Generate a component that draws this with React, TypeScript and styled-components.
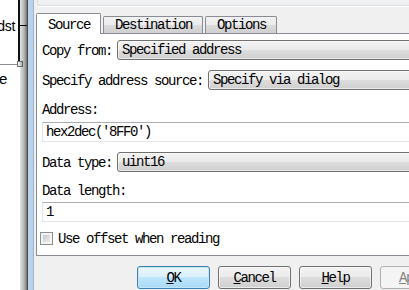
import React from "react";
import styled, { createGlobalStyle, css } from "styled-components";

const Global = createGlobalStyle`
  html, body { margin: 0; padding: 0; background: #fff; overflow: hidden; }
  body { font-family: "Liberation Mono", "Courier New", monospace; }
`;

const Screen = styled.div`
  display: flex;
  width: 409px;
  height: 290px;
  overflow: hidden;
  background: #fff;
`;

/* --- model canvas behind the dialog --- */
const Canvas = styled.div`
  position: relative;
  flex: 0 0 27px;
  height: 100%;
  background: #fff;
  font-family: "Liberation Sans", Arial, sans-serif;
  color: #000;
`;

const Block = styled.div`
  position: absolute;
  left: -10px;
  top: -10px;
  width: 28px;
  height: 74px;
  border-right: 2px solid #111;
  border-bottom: 1px solid #8a8f96;
`;

const PortLabel = styled.span`
  position: absolute;
  right: 3px;
  top: 28px;
  font-size: 14px;
  line-height: 16px;
  letter-spacing: -0.3px;
`;

const PortLine = styled.div`
  position: absolute;
  left: 20px;
  top: 25px;
  width: 7px;
  height: 1px;
  background: #000;
`;

const Handle = styled.div`
  position: absolute;
  left: 17px;
  top: 61px;
  width: 4px;
  height: 4px;
  border: 1px solid #777;
  background: #e6e6e6;
`;

const StrayText = styled.span`
  position: absolute;
  left: -1px;
  top: 71px;
  font-size: 15px;
  line-height: 16px;
`;

const Shadow = styled.div`
  position: absolute;
  right: 0;
  top: 0;
  bottom: 0;
  width: 7px;
  background: linear-gradient(to right, rgba(0,0,0,0.1), rgba(0,0,0,0.3) 60%, rgba(0,0,0,0.55));
`;

/* --- dialog window --- */
const Window = styled.div`
  flex: none;
  display: flex;
  height: 100%;
  border-left: 1px solid #4a4a4a;
  background: #b9d1ea;
  padding-left: 5px;
`;

const Client = styled.div`
  box-sizing: border-box;
  width: 428px;
  height: 100%;
  border-left: 1px solid #9fb3cc;
  background: #f0f0f0;
  padding-left: 2px;
  display: flex;
  flex-direction: column;
  font-size: 14px;
  letter-spacing: -1.4px;
  color: #000;
`;

const TopStrip = styled.div`
  height: 5px;
  margin-left: 1px;
  border-left: 1px solid #d5dfe5;
  border-bottom: 1px solid #d5dfe5;
  border-bottom-left-radius: 3px;
  box-shadow: 0 1px 0 #fff;
`;

const TabBar = styled.div`
  display: flex;
  align-items: flex-end;
  height: 20px;
  margin-top: 7px;
`;

const Tab = styled.div<{ $active?: boolean }>`
  box-sizing: border-box;
  padding: 0 10px 0 11px;
  line-height: 17px;
  white-space: nowrap;
  border: 1px solid #898c95;
  border-bottom: none;
  border-radius: 2px 2px 0 0;
  ${(p) =>
    p.$active
      ? css`
          position: relative;
          z-index: 1;
          height: 21px;
          margin-bottom: -1px;
          padding-top: 3px;
          background: #fff;
        `
      : css`
          height: 17px;
          margin-left: 2px;
          background: linear-gradient(#f2f2f2, #ebebeb 50%, #dddddd 50%, #cfcfcf);
        `}
`;

const Panel = styled.div`
  box-sizing: border-box;
  width: 400px;
  border: 1px solid #898c95;
  background: #fff;
  padding: 6px 0 10px 5px;
  display: flex;
  flex-direction: column;
`;

const Row = styled.div<{ $mt?: number }>`
  display: flex;
  align-items: center;
  gap: 5px;
  margin-top: ${(p) => p.$mt ?? 0}px;
`;

const Label = styled.div<{ $mt?: number }>`
  height: 16px;
  line-height: 18px;
  white-space: nowrap;
  margin-top: ${(p) => p.$mt ?? 0}px;
`;

const Combo = styled.div`
  flex: 1;
  box-sizing: border-box;
  height: 20px;
  line-height: 19px;
  padding-left: 4px;
  white-space: nowrap;
  border: 1px solid #707070;
  border-radius: 3px;
  background: linear-gradient(#f2f2f2, #ebebeb 50%, #dddddd 50%, #cfcfcf);
  box-shadow: inset 0 0 0 1px rgba(255,255,255,0.55);
`;

const TextBox = styled.div<{ $mt?: number }>`
  box-sizing: border-box;
  height: 20px;
  line-height: 19px;
  padding-left: 3px;
  margin-top: ${(p) => p.$mt ?? 0}px;
  border: 1px solid #e2e3ea;
  border-top-color: #abadb3;
  border-bottom-color: #e3e9ef;
  background: #fff;
  white-space: nowrap;
`;

const CheckRow = styled.label`
  display: flex;
  align-items: center;
  gap: 5px;
  margin-top: 10px;
  margin-left: -2px;
  height: 13px;
  line-height: 16px;
`;

const CheckBox = styled.span`
  box-sizing: border-box;
  width: 13px;
  height: 13px;
  border: 1px solid #8e8f8f;
  background: #f4f4f4;
  padding: 2px;
  display: flex;
  &::after {
    content: "";
    flex: 1;
    background: linear-gradient(135deg, #c3c7cd, #f0f0f0);
  }
`;

const ButtonRow = styled.div`
  display: flex;
  justify-content: flex-end;
  gap: 8px;
  margin-top: 10px;
  padding-right: 8px;
`;

const Button = styled.div<{ $variant?: "default" | "disabled" }>`
  box-sizing: border-box;
  width: 73px;
  height: 23px;
  line-height: 22px;
  text-align: center;
  border: 1px solid #707070;
  border-radius: 3px;
  background: linear-gradient(#f2f2f2, #ebebeb 50%, #dddddd 50%, #cfcfcf);
  box-shadow: inset 0 0 0 1px rgba(255,255,255,0.6);
  color: #000;
  ${(p) =>
    p.$variant === "default" &&
    css`
      border-color: #3c7fb1;
      background: linear-gradient(#eaf6fd, #d9f0fc 50%, #bee6fd 50%, #a7d9f5);
      box-shadow: inset 0 0 0 1px #c5e6f8;
    `}
  ${(p) =>
    p.$variant === "disabled" &&
    css`
      border-color: #adb2b5;
      background: #f4f4f4;
      box-shadow: none;
      color: #838383;
    `}
`;

export default function App() {
  return (
    <>
      <Global />
      <Screen>
        <Canvas>
          <Block>
            <PortLabel>dst</PortLabel>
          </Block>
          <PortLine />
          <Handle />
          <StrayText>e</StrayText>
          <Shadow />
        </Canvas>
        <Window>
          <Client>
            <TopStrip />
            <TabBar>
              <Tab $active>Source</Tab>
              <Tab>Destination</Tab>
              <Tab>Options</Tab>
            </TabBar>
            <Panel>
              <Row>
                <Label>Copy from:</Label>
                <Combo>Specified address</Combo>
              </Row>
              <Row $mt={10}>
                <Label>Specify address source:</Label>
                <Combo>Specify via dialog</Combo>
              </Row>
              <Label $mt={11}>Address:</Label>
              <TextBox $mt={5}>hex2dec('8FF0')</TextBox>
              <Row $mt={10}>
                <Label>Data type:</Label>
                <Combo>uint16</Combo>
              </Row>
              <Label $mt={10}>Data length:</Label>
              <TextBox $mt={4}>1</TextBox>
              <CheckRow>
                <CheckBox />
                <span>Use offset when reading</span>
              </CheckRow>
            </Panel>
            <ButtonRow>
              <Button $variant="default"><u>O</u>K</Button>
              <Button><u>C</u>ancel</Button>
              <Button><u>H</u>elp</Button>
              <Button $variant="disabled"><u>A</u>pply</Button>
            </ButtonRow>
          </Client>
        </Window>
      </Screen>
    </>
  );
}
